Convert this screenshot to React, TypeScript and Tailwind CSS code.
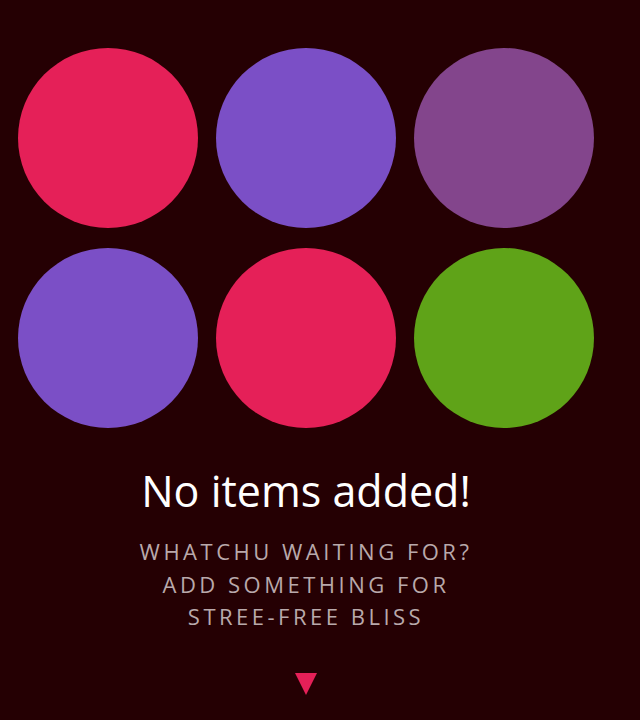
export default function App() {
  const colors = ["bg-[#e52058]", "bg-[#7b4fc6]", "bg-[#83458c]", "bg-[#7b4fc6]", "bg-[#e52058]", "bg-[#5fa318]"];
  return (
    <div className="w-[640px] h-[720px] bg-[#250003] overflow-hidden" style={{ fontFamily: '"Open Sans", "Noto Sans", sans-serif' }}>
      <div className="w-[612px] px-[18px] pt-[48px] flex flex-col items-center">
        <div className="grid grid-cols-3 gap-x-[18px] gap-y-[20px]">
          {colors.map((c, i) => (
            <div key={i} className={`w-[180px] h-[180px] rounded-full ${c}`} />
          ))}
        </div>
        <h1 className="mt-[38px] text-white text-[43px] leading-[50px] font-medium">No items added!</h1>
        <p className="mt-[19px] text-[#b9a9ab] text-[22px] leading-[32.5px] tracking-[3.5px] text-center uppercase font-medium">
          Whatchu waiting for?<br />Add something for<br />stree-free bliss
        </p>
        <svg className="mt-[40px]" width="22" height="22" viewBox="0 0 22 22">
          <polygon points="0,0 22,0 11,22" fill="#e52058" />
        </svg>
      </div>
    </div>
  );
}
